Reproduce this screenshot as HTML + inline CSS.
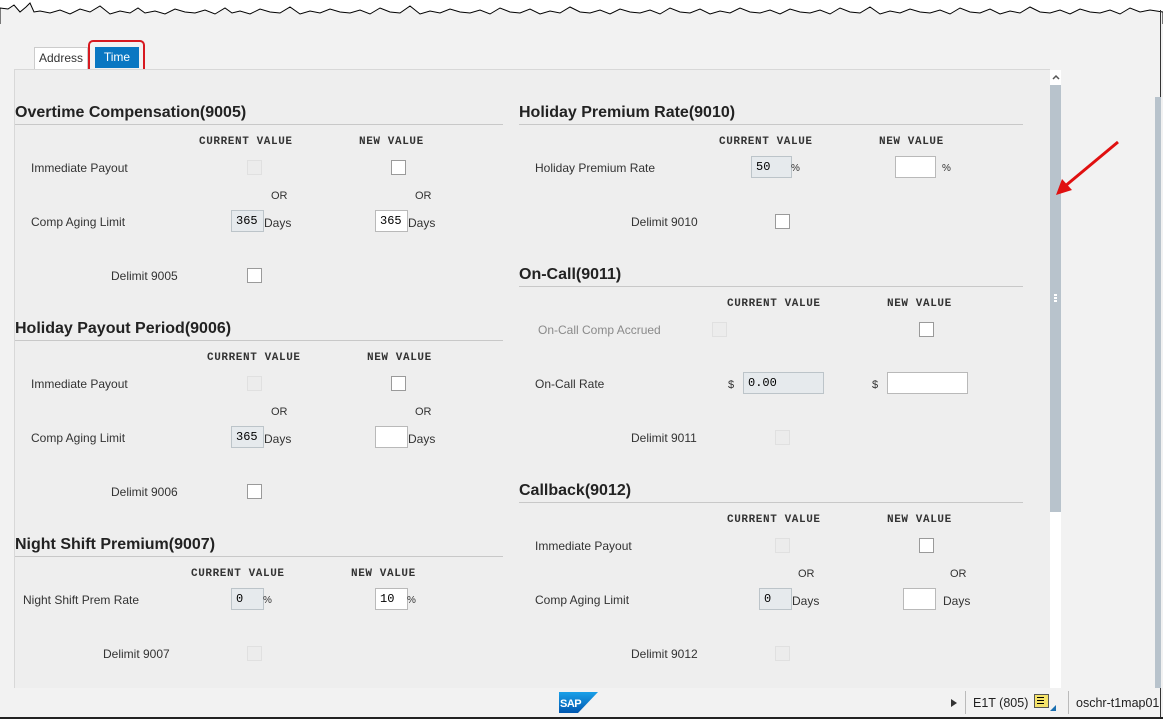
<!DOCTYPE html>
<html><head><meta charset="utf-8"><style>
body{margin:0;width:1163px;height:719px;position:relative;overflow:hidden;background:#f2f2f2;font-family:"Liberation Sans",Arial,sans-serif;font-size:12px;color:#333}
.a{position:absolute;white-space:nowrap}
.l{position:absolute;white-space:nowrap;line-height:14px;transform:translateY(-6px)}
.h{position:absolute;white-space:nowrap;font-weight:bold;font-size:16px;color:#222;line-height:18px;transform:translateY(-8px)}
.hl{position:absolute;height:1px;background:#c8c8c8}
.c{position:absolute;white-space:nowrap;font-family:"Liberation Mono",monospace;font-weight:bold;font-size:11px;letter-spacing:0.6px;color:#333;line-height:12px;transform:translateY(-5px)}
.cb{position:absolute;width:13px;height:13px;border:1px solid #9a9a9a;background:#fff;transform:translateY(-7px)}
.cd{position:absolute;width:13px;height:13px;border:1px solid #e0e0e0;background:#ececec;transform:translateY(-7px)}
.in{position:absolute;height:20px;border:1px solid #b9b9b9;background:#fff;font-family:"Liberation Mono",monospace;font-size:12px;line-height:20px;padding-left:4px;box-sizing:content-box;transform:translateY(-11px);color:#000}
.ro{background:#e6eaed;border-color:#bcc4c9}
</style></head><body>
<div class="a" style="left:0;top:0;width:1163px;height:14px;background:#fff"></div>
<svg class="a" style="left:0;top:0" width="1163" height="24"><polyline fill="#f2f2f2" stroke="#000" stroke-width="1" points="0,24 0,8 8,9 14,5 20,12 26,7 30,3 34,12 40,11 50,13 60,10 70,14 80,9 90,12 100,6 110,14 120,11 130,13 138,8 145,13 155,11 165,14 175,9 185,12 195,13 205,10 215,14 225,8 232,13 240,11 250,14 260,9 270,12 280,13 290,7 300,14 310,11 320,13 330,9 340,12 350,13 360,10 370,14 380,8 390,12 400,13 410,6 420,14 430,11 440,13 450,9 460,12 470,13 480,10 490,14 500,8 510,12 520,13 530,9 540,14 550,11 560,13 570,7 580,12 590,13 600,10 610,14 620,9 630,12 640,13 650,10 660,14 670,8 680,12 690,13 700,9 710,14 720,11 730,13 740,8 750,12 760,13 770,10 780,14 790,9 800,12 810,13 820,10 830,14 840,8 850,12 860,13 870,7 880,14 890,11 900,13 910,9 920,12 930,13 940,10 950,14 960,8 970,12 980,13 990,9 1000,14 1010,11 1020,13 1030,7 1040,12 1050,13 1060,10 1070,14 1080,9 1090,12 1100,13 1110,10 1120,14 1130,8 1140,12 1150,10 1163,12 1163,24"/></svg>
<div class="a" style="left:1160px;top:10px;width:1px;height:709px;background:#333"></div>
<div class="a" style="left:0;top:717px;width:1163px;height:2px;background:#222"></div>

<div class="a" style="left:34px;top:47px;width:54px;height:22px;background:#fff;border:1px solid #ccc;border-bottom:none;box-sizing:border-box;text-align:center;line-height:21px;color:#333">Address</div>
<div class="a" style="left:95px;top:47px;width:44px;height:21px;background:#0a77c2;color:#fff;text-align:center;line-height:21px">Time</div>
<div class="a" style="left:88px;top:40px;width:57px;height:34px;border:2px solid #d71920;border-radius:5px;box-sizing:border-box"></div>

<div class="a" style="left:14px;top:69px;width:1036px;height:619px;background:#eeeeee;border-top:1px solid #d8d8d8;border-left:1px solid #d8d8d8;box-sizing:border-box"></div>
<div class="a" style="left:1050px;top:70px;width:11px;height:618px;background:#fff"></div>
<div class="a" style="left:1050px;top:85px;width:11px;height:427px;background:#b8c3cc"></div>
<svg class="a" style="left:1051px;top:73px" width="10" height="8"><polyline points="2,6 5,3 8,6" fill="none" stroke="#555" stroke-width="1.5"/></svg>
<div class="a" style="left:1054px;top:294px;width:3px;height:2px;background:#fff;box-shadow:0 3px 0 #fff,0 6px 0 #fff"></div>
<div class="a" style="left:1155px;top:97px;width:6px;height:591px;background:#b8c3cc"></div>
<svg class="a" style="left:1050px;top:135px" width="80" height="70"><line x1="68" y1="7" x2="14" y2="52" stroke="#e01010" stroke-width="3"/><polygon points="6,60 12,44 22,55" fill="#e01010"/></svg>

<div class="h" style="left:15px;top:112px">Overtime Compensation(9005)</div>
<div class="hl" style="left:15px;top:124px;width:488px"></div>
<div class="c" style="left:199px;top:141px">CURRENT&nbsp;VALUE</div>
<div class="c" style="left:359px;top:141px">NEW&nbsp;VALUE</div>
<div class="l" style="left:31px;top:167px">Immediate Payout</div>
<div class="cd" style="left:247px;top:167px"></div><div class="cb" style="left:391px;top:167px"></div>
<div class="l" style="left:271px;top:195px;font-size:11px">OR</div><div class="l" style="left:415px;top:195px;font-size:11px">OR</div>
<div class="l" style="left:31px;top:221px">Comp Aging Limit</div>
<div class="in ro" style="left:231px;top:221px;width:27px">365</div><div class="l" style="left:264px;top:222px">Days</div>
<div class="in" style="left:375px;top:221px;width:27px">365</div><div class="l" style="left:408px;top:222px">Days</div>
<div class="l" style="left:111px;top:275px">Delimit 9005</div><div class="cb" style="left:247px;top:275px"></div>

<div class="h" style="left:15px;top:328px">Holiday Payout Period(9006)</div>
<div class="hl" style="left:15px;top:340px;width:488px"></div>
<div class="c" style="left:207px;top:357px">CURRENT&nbsp;VALUE</div>
<div class="c" style="left:367px;top:357px">NEW&nbsp;VALUE</div>
<div class="l" style="left:31px;top:383px">Immediate Payout</div>
<div class="cd" style="left:247px;top:383px"></div><div class="cb" style="left:391px;top:383px"></div>
<div class="l" style="left:271px;top:411px;font-size:11px">OR</div><div class="l" style="left:415px;top:411px;font-size:11px">OR</div>
<div class="l" style="left:31px;top:437px">Comp Aging Limit</div>
<div class="in ro" style="left:231px;top:437px;width:27px">365</div><div class="l" style="left:264px;top:438px">Days</div>
<div class="in" style="left:375px;top:437px;width:27px"></div><div class="l" style="left:408px;top:438px">Days</div>
<div class="l" style="left:111px;top:491px">Delimit 9006</div><div class="cb" style="left:247px;top:491px"></div>

<div class="h" style="left:15px;top:544px">Night Shift Premium(9007)</div>
<div class="hl" style="left:15px;top:556px;width:488px"></div>
<div class="c" style="left:191px;top:573px">CURRENT&nbsp;VALUE</div>
<div class="c" style="left:351px;top:573px">NEW&nbsp;VALUE</div>
<div class="l" style="left:23px;top:599px">Night Shift Prem Rate</div>
<div class="in ro" style="left:231px;top:599px;width:27px">0</div><div class="l" style="left:263px;top:600px;font-size:10px">%</div>
<div class="in" style="left:375px;top:599px;width:27px">10</div><div class="l" style="left:407px;top:600px;font-size:10px">%</div>
<div class="l" style="left:103px;top:653px">Delimit 9007</div><div class="cd" style="left:247px;top:653px"></div>

<div class="h" style="left:519px;top:112px">Holiday Premium Rate(9010)</div>
<div class="hl" style="left:519px;top:124px;width:504px"></div>
<div class="c" style="left:719px;top:141px">CURRENT&nbsp;VALUE</div>
<div class="c" style="left:879px;top:141px">NEW&nbsp;VALUE</div>
<div class="l" style="left:535px;top:167px">Holiday Premium Rate</div>
<div class="in ro" style="left:751px;top:167px;width:35px">50</div><div class="l" style="left:791px;top:168px;font-size:10px">%</div>
<div class="in" style="left:895px;top:167px;width:35px"></div><div class="l" style="left:942px;top:168px;font-size:10px">%</div>
<div class="l" style="left:631px;top:221px">Delimit 9010</div><div class="cb" style="left:775px;top:221px"></div>

<div class="h" style="left:519px;top:274px">On-Call(9011)</div>
<div class="hl" style="left:519px;top:286px;width:504px"></div>
<div class="c" style="left:727px;top:303px">CURRENT&nbsp;VALUE</div>
<div class="c" style="left:887px;top:303px">NEW&nbsp;VALUE</div>
<div class="l" style="left:538px;top:329px;color:#8a8a8a">On-Call Comp Accrued</div>
<div class="cd" style="left:712px;top:329px"></div><div class="cb" style="left:919px;top:329px"></div>
<div class="l" style="left:535px;top:383px">On-Call Rate</div>
<div class="l" style="left:728px;top:384px;font-size:11px">$</div>
<div class="in ro" style="left:743px;top:383px;width:75px">0.00</div>
<div class="l" style="left:872px;top:384px;font-size:11px">$</div>
<div class="in" style="left:887px;top:383px;width:75px"></div>
<div class="l" style="left:631px;top:437px">Delimit 9011</div><div class="cd" style="left:775px;top:437px"></div>

<div class="h" style="left:519px;top:490px">Callback(9012)</div>
<div class="hl" style="left:519px;top:502px;width:504px"></div>
<div class="c" style="left:727px;top:519px">CURRENT&nbsp;VALUE</div>
<div class="c" style="left:887px;top:519px">NEW&nbsp;VALUE</div>
<div class="l" style="left:535px;top:545px">Immediate Payout</div>
<div class="cd" style="left:775px;top:545px"></div><div class="cb" style="left:919px;top:545px"></div>
<div class="l" style="left:798px;top:573px;font-size:11px">OR</div><div class="l" style="left:950px;top:573px;font-size:11px">OR</div>
<div class="l" style="left:535px;top:599px">Comp Aging Limit</div>
<div class="in ro" style="left:759px;top:599px;width:27px">0</div><div class="l" style="left:792px;top:600px">Days</div>
<div class="in" style="left:903px;top:599px;width:27px"></div><div class="l" style="left:943px;top:600px">Days</div>
<div class="l" style="left:631px;top:653px">Delimit 9012</div><div class="cd" style="left:775px;top:653px"></div>

<svg class="a" style="left:559px;top:692px" width="39" height="21"><defs><linearGradient id="g" x1="0" y1="0" x2="0" y2="1"><stop offset="0" stop-color="#1aa0e8"/><stop offset="1" stop-color="#0057b0"/></linearGradient></defs><polygon points="0,0 39,0 19,21 0,21" fill="url(#g)"/><text x="1" y="15" font-family="Liberation Sans" font-weight="bold" font-size="11" fill="#fff" letter-spacing="-0.5">SAP</text></svg>
<svg class="a" style="left:950px;top:698px" width="8" height="10"><polygon points="1,1 7,5 1,9" fill="#333"/></svg>
<div class="a" style="left:965px;top:691px;width:1px;height:23px;background:#bbb"></div>
<div class="a" style="left:973px;top:696px;font-size:12.5px;color:#222">E1T (805)</div>
<div class="a" style="left:1034px;top:694px;width:13px;height:12px;background:#f5e36a;border:1px solid #555"></div>
<div class="a" style="left:1037px;top:697px;width:7px;height:1px;background:#000;box-shadow:0 3px 0 #000,0 6px 0 #000"></div>
<svg class="a" style="left:1050px;top:705px" width="6" height="6"><polygon points="6,0 6,6 0,6" fill="#1a6fb0"/></svg>
<div class="a" style="left:1068px;top:691px;width:1px;height:23px;background:#bbb"></div>
<div class="a" style="left:1076px;top:696px;font-size:12.5px;color:#222">oschr-t1map01</div>
</body></html>
